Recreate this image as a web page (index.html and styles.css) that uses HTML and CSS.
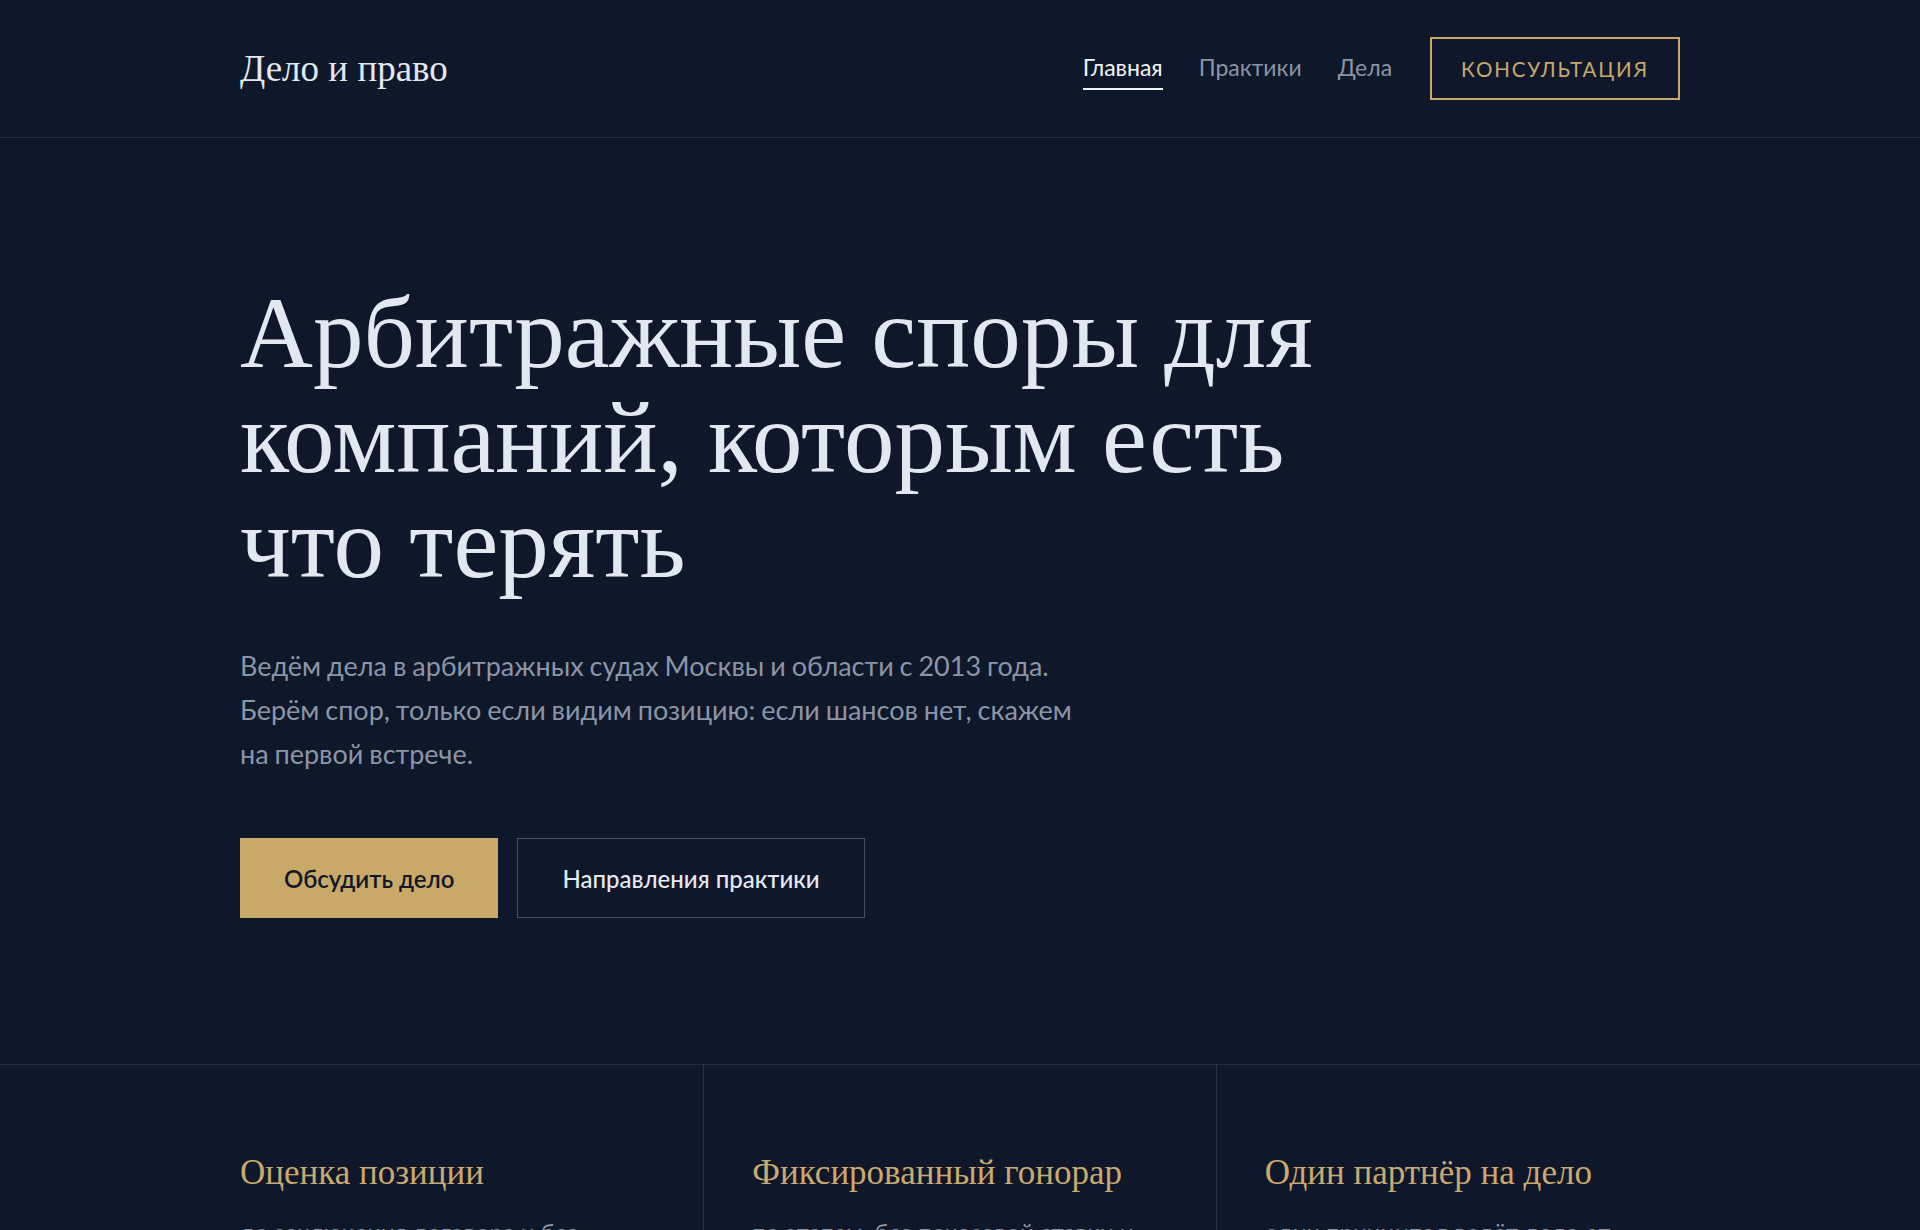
FILE: index.html
```html
<!DOCTYPE html>
<html lang="ru">
<head>
<meta charset="utf-8">
<title>Дело и право</title>
<link rel="stylesheet" href="styles.css">
</head>
<body>
<header class="site-header">
  <div class="container header-inner">
    <a class="logo" href="#">Дело и право</a>
    <nav class="nav">
      <a class="nav-link active" href="#">Главная</a>
      <a class="nav-link" href="#">Практики</a>
      <a class="nav-link" href="#">Дела</a>
      <a class="nav-cta" href="#">Консультация</a>
    </nav>
  </div>
</header>
<main>
  <section class="hero">
    <div class="container">
      <h1 class="hero-title">Арбитражные споры для компаний, которым есть что терять</h1>
      <p class="hero-text">Ведём дела в арбитражных судах Москвы и области с 2013 года. Берём спор, только если видим позицию: если шансов нет, скажем на первой встрече.</p>
      <div class="hero-actions">
        <a class="btn btn-primary" href="#">Обсудить дело</a>
        <a class="btn btn-outline" href="#">Направления практики</a>
      </div>
    </div>
  </section>
  <section class="features">
    <div class="container features-grid">
      <div class="feature">
        <h2 class="feature-title">Оценка позиции</h2>
        <p class="feature-text">до заключения договора и без оплаты: смотрим документы и говорим честно.</p>
      </div>
      <div class="feature">
        <h2 class="feature-title">Фиксированный гонорар</h2>
        <p class="feature-text">по этапам, без почасовой ставки и скрытых расходов.</p>
      </div>
      <div class="feature">
        <h2 class="feature-title">Один партнёр на дело</h2>
        <p class="feature-text">один принципал ведёт дело от первой встречи до решения.</p>
      </div>
    </div>
  </section>
</main>
</body>
</html>
```

FILE: styles.css
```css
* { box-sizing: border-box; }
html, body { margin: 0; padding: 0; }
body {
  background: #0f172a;
  color: #e2e8f0;
  font-family: Lato, "Noto Sans", sans-serif;
}
a { text-decoration: none; color: inherit; }
.container {
  width: 1440px;
  margin: 0 auto;
}
.site-header {
  border-bottom: 1px solid #1f2a3c;
}
.header-inner {
  height: 137px;
  display: flex;
  align-items: center;
  justify-content: space-between;
}
.logo {
  font-family: "Liberation Serif", "Times New Roman", serif;
  font-size: 37px;
  color: #e2e8f0;
}
.nav {
  display: flex;
  align-items: center;
  gap: 36px;
}
.nav-link {
  font-size: 23px;
  color: #8a94a6;
  padding: 6px 0 7px;
  border-bottom: 2px solid transparent;
}
.nav-link.active {
  color: #f1f5f9;
  border-bottom-color: #f1f5f9;
}
.nav-cta {
  margin-left: 2px;
  height: 63px;
  padding: 0 29px;
  display: flex;
  align-items: center;
  border: 2px solid #c9a86a;
  color: #c9a86a;
  font-size: 20.5px;
  text-transform: uppercase;
  letter-spacing: 0.09em;
}
.hero {
  padding: 143px 0 146px;
  border-bottom: 1px solid #243044;
}
.hero-title {
  margin: 0;
  max-width: 1100px;
  font-family: "Liberation Serif", "Times New Roman", serif;
  font-weight: 400;
  font-size: 101px;
  line-height: 105px;
  color: #e2e8f0;
}
.hero-text {
  margin: 48px 0 0;
  max-width: 850px;
  font-size: 27px;
  line-height: 44px;
  word-spacing: -1px;
  color: #8b95a7;
}
.hero-actions {
  margin-top: 62px;
  display: flex;
  gap: 19px;
}
.btn {
  height: 80px;
  padding: 0 44px;
  display: flex;
  align-items: center;
  font-size: 24px;
  font-weight: 600;
}
.btn-primary {
  background: #c9a96a;
  color: #111827;
}
.btn-outline {
  border: 1px solid #465264;
  color: #e5e9f0;
  font-weight: 500;
}
.features-grid {
  display: flex;
}
.feature {
  flex: 1 1 0;
  padding: 88px 48px 60px;
  border-right: 1px solid #253044;
}
.feature:first-child { padding-left: 0; }
.feature:last-child { padding-right: 0; border-right: none; }
.feature-title {
  margin: 0;
  font-family: "Liberation Serif", "Times New Roman", serif;
  font-weight: 400;
  font-size: 35px;
  line-height: 40px;
  color: #c9a96e;
}
.feature-text {
  margin: 21px 0 0;
  font-size: 24px;
  line-height: 36px;
  color: #8b95a7;
}
```
